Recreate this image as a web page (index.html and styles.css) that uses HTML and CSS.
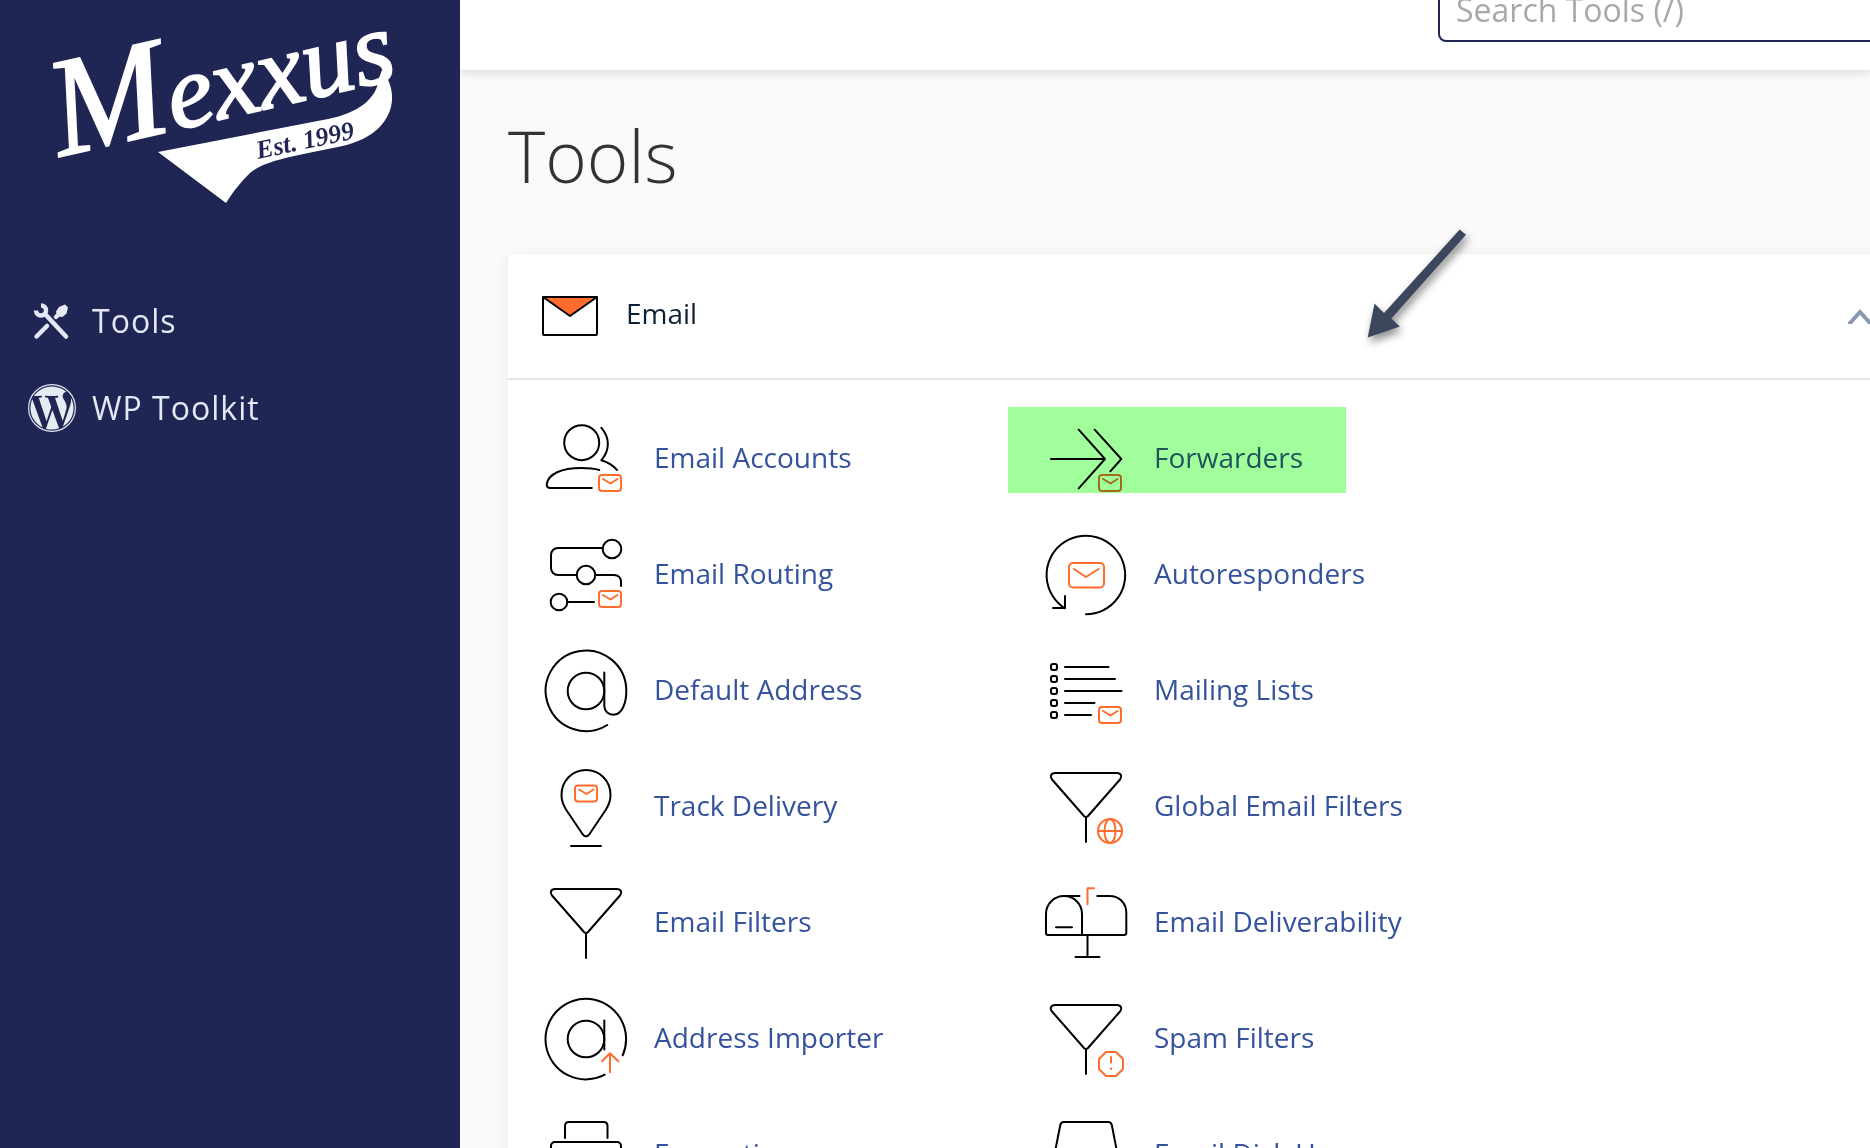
FILE: index.html
```html
<!DOCTYPE html>
<html lang="en">
<head>
    <meta charset="UTF-8">
    <meta name="viewport" content="width=device-width, initial-scale=1.0">
    <title>Tools</title>
    <link rel="stylesheet" href="styles.css">
</head>
<body>
    <!-- Shared icon parts -->
    <svg class="sprite" aria-hidden="true">
        <symbol id="mini-mail" viewBox="0 0 26 20">
            <rect x="1.5" y="1.5" width="22" height="16" rx="3"/>
            <path d="M5.5 5.5l7.500 4.500 7-4.500"/>
        </symbol>
        <symbol id="funnel" viewBox="0 0 96 96">
            <path d="M17 14h62c4 0 5.500 3.500 3 6.500L50 57c-1.200 1.200-2.800 1.200-4 0L14 20.500c-2.500-3-1-6.500 3-6.500zM48 58v25"/>
        </symbol>
    </svg>

    <div class="app">
        <!-- Sidebar -->
        <aside class="sidebar">
            <a href="#" class="logo" aria-label="Mexxus Est. 1999">
                <svg viewBox="50 10 350 200" width="350" height="200">
                    <path class="logo-fill" d="M158 152L328 119C358 113 377 99 379 78L382 70C393 84 395 101 388 115C380 132 362 142 338 147C300 155 262 160 248 175C238 185 231 195 226 203Z"/>
                    <g transform="rotate(-13 62 154)">
                        <text class="logo-name" x="60" y="156"><tspan class="logo-initial">M</tspan>exxus</text>
                    </g>
                    <text class="logo-est" x="258" y="159" transform="rotate(-12 258 159)">Est. 1999</text>
                </svg>
            </a>
            <nav class="menu">
                <a href="#" class="menu-item">
                    <svg viewBox="0 0 48 48" width="48" height="48">
                        <path class="tool-head" d="M8 13.500A5 5 0 1 0 13 8.500"/>
                        <path class="tool-line" d="M17 17l21 22.500M19 29L8.500 39.500M28 20l5-5"/>
                        <path class="tool-fill" d="M37 7.500l3 3-1.500 6-4 3.500-3.500-.5-2.500-2.500-.5-2.500L31 10z"/>
                    </svg>
                    <span>Tools</span>
                </a>
                <a href="#" class="menu-item">
                    <svg viewBox="0 0 24 24" width="48" height="48">
                        <circle class="wp-ring" cx="12" cy="12" r="11.700"/>
                        <path class="tool-fill" d="M21.469 6.825c.84 1.537 1.318 3.3 1.318 5.175 0 3.979-2.156 7.456-5.363 9.325l3.295-9.527c.615-1.54.82-2.771.82-3.864 0-.405-.026-.78-.07-1.11m-7.981.105c.647-.03 1.232-.105 1.232-.105.582-.075.514-.93-.067-.899 0 0-1.755.135-2.88.135-1.064 0-2.85-.15-2.85-.15-.585-.03-.661.855-.075.885 0 0 .54.061 1.125.09l1.68 4.605-2.37 7.08L5.354 6.9c.649-.03 1.234-.1 1.234-.1.585-.075.516-.93-.065-.896 0 0-1.746.138-2.874.138-.2 0-.438-.008-.69-.015C4.911 3.15 8.235 1.215 12 1.215c2.809 0 5.365 1.072 7.286 2.833-.046-.003-.091-.009-.141-.009-1.06 0-1.812.923-1.812 1.914 0 .89.513 1.643 1.06 2.531.411.72.89 1.643.89 2.977 0 .915-.354 1.994-.821 3.479l-1.075 3.585-3.9-11.61zM12 22.784c-1.059 0-2.081-.153-3.048-.437l3.237-9.406 3.315 9.087c.024.053.05.101.078.149-1.12.393-2.325.607-3.582.607M1.211 12c0-1.564.336-3.05.935-4.39L7.29 21.709C3.694 19.96 1.212 16.271 1.211 12"/>
                    </svg>
                    <span>WP Toolkit</span>
                </a>
            </nav>
        </aside>

        <div class="page">
            <!-- Search bar -->
            <header class="topbar">
                <input type="search" class="search" placeholder="Search Tools (/)" aria-label="Search Tools">
            </header>

            <main class="content">
                <h1>Tools</h1>

                <section class="card">
                    <div class="card-header">
                        <svg class="card-icon" viewBox="0 0 64 44" width="64" height="44">
                            <path class="flap" d="M5 3h54L32 22z"/>
                            <rect x="5" y="3" width="54" height="38" rx="1"/>
                        </svg>
                        <h2>Email</h2>
                        <button class="toggle" aria-label="Collapse Email">
                            <svg viewBox="0 0 24 16" width="24" height="16"><path d="M2 15L12 4l10 11"/></svg>
                        </button>
                    </div>

                    <div class="tools">
                        <a href="#" class="tool">
                            <svg class="icon" viewBox="0 0 96 96">
                                <circle cx="43.700" cy="31.700" r="17.500"/>
                                <path d="M63.300 16.700c8.500 10 9 22 0 32.600 6 1.700 11.500 5 15.700 9.700M61.300 59c-5-1.500-11-2-18-2-20 0-33 6-34.500 16-.3 2.700 1 4 3.500 4h41.500"/>
                                <use class="accent" href="#mini-mail" x="59.500" y="62.500" width="26" height="20"/>
                            </svg>
                            <span>Email Accounts</span>
                        </a>
                        <a href="#" class="tool highlighted">
                            <svg class="icon" viewBox="0 0 96 96">
                                <path d="M13 48h54M40.700 18.700L67 48 40.700 77.300M56.700 18.700L83.300 48l-11 12.300"/>
                                <use class="accent" href="#mini-mail" x="59.500" y="62.500" width="26" height="20"/>
                            </svg>
                            <span>Forwarders</span>
                        </a>
                        <a href="#" class="tool">
                            <svg class="icon" viewBox="0 0 96 96">
                                <circle cx="74" cy="22" r="9.300"/>
                                <circle cx="48" cy="48" r="9.300"/>
                                <circle cx="21" cy="75" r="8.300"/>
                                <path d="M64.500 21H20c-4 0-7 3-7 7v13c0 4 3 7 7 7h18.500M57.500 48H76c4.500 0 7 3 7 7v4M29.500 75H56"/>
                                <use class="accent" href="#mini-mail" x="59.500" y="62.500" width="26" height="20"/>
                            </svg>
                            <span>Email Routing</span>
                        </a>
                        <a href="#" class="tool">
                            <svg class="icon" viewBox="0 0 96 96">
                                <path d="M48 87.300A39.300 39.300 0 1 0 27 81.300M15 81h12V69"/>
                                <g class="accent">
                                    <rect x="31" y="36" width="35" height="24.500" rx="4"/>
                                    <path d="M36 42l12 8 12.500-8"/>
                                </g>
                            </svg>
                            <span>Autoresponders</span>
                        </a>
                        <a href="#" class="tool">
                            <svg class="icon" viewBox="0 0 96 96">
                                <circle cx="48" cy="48" r="18.300"/>
                                <path d="M66.300 29.500V63c0 5 4 8.700 9 8.700 9 0 13-12 13-23.700A40.300 40.300 0 1 0 69.300 82"/>
                            </svg>
                            <span>Default Address</span>
                        </a>
                        <a href="#" class="tool">
                            <svg class="icon" viewBox="0 0 96 96">
                                <rect x="13" y="21" width="6" height="6" rx="2"/>
                                <rect x="13" y="33" width="6" height="6" rx="2"/>
                                <rect x="13" y="45" width="6" height="6" rx="2"/>
                                <rect x="13" y="57" width="6" height="6" rx="2"/>
                                <rect x="13" y="69" width="6" height="6" rx="2"/>
                                <path d="M27 24h43.500M27 36h50M27 48h56.500M27 60h29.500M27 72h26"/>
                                <use class="accent" href="#mini-mail" x="59.500" y="62.500" width="26" height="20"/>
                            </svg>
                            <span>Mailing Lists</span>
                        </a>
                        <a href="#" class="tool">
                            <svg class="icon" viewBox="0 0 96 96">
                                <path d="M48 11c-14 0-24.500 11-24.500 25 0 6 2 10.500 4.500 14.500L44.500 75c1.800 3 5.200 3 7 0L68 50.500c2.500-4 4.500-8.500 4.500-14.500 0-14-10.500-25-24.500-25zM33 87h30"/>
                                <use class="accent" href="#mini-mail" x="35.500" y="25" width="26" height="20"/>
                            </svg>
                            <span>Track Delivery</span>
                        </a>
                        <a href="#" class="tool">
                            <svg class="icon" viewBox="0 0 96 96">
                                <use href="#funnel" width="96" height="96"/>
                                <g class="accent">
                                    <circle cx="72" cy="72" r="12"/>
                                    <ellipse cx="72" cy="72" rx="5.500" ry="12"/>
                                    <path d="M60 72h24"/>
                                </g>
                            </svg>
                            <span>Global Email Filters</span>
                        </a>
                        <a href="#" class="tool">
                            <svg class="icon" viewBox="0 0 96 96">
                                <use href="#funnel" width="96" height="96"/>
                            </svg>
                            <span>Email Filters</span>
                        </a>
                        <a href="#" class="tool">
                            <svg class="icon" viewBox="0 0 96 96">
                                <path d="M44 60V39c0-10-8-18-18-18S8 29 8 39v19c0 1.500.5 2 2 2h76c1.500 0 2.300-.5 2.300-2V38c0-10-7-17-17-17h-12M26 21h15.500M18 52.300h16M49.500 60v22M37.500 82h24"/>
                                <path class="accent" d="M49.500 29.300v-16h6.500"/>
                            </svg>
                            <span>Email Deliverability</span>
                        </a>
                        <a href="#" class="tool">
                            <svg class="icon" viewBox="0 0 96 96">
                                <circle cx="48" cy="48" r="18.300"/>
                                <path d="M66.300 29.500v29M84.700 64.300A40.300 40.300 0 1 0 66.700 83.700"/>
                                <path class="accent" d="M72 81.300V62.500M64 70.300l8-8 8.300 8"/>
                            </svg>
                            <span>Address Importer</span>
                        </a>
                        <a href="#" class="tool">
                            <svg class="icon" viewBox="0 0 96 96">
                                <use href="#funnel" width="96" height="96"/>
                                <path class="accent" d="M68 61h10l7 7v10l-7 7H68l-7-7V68zM73 66v5.500M73 77.500v.5"/>
                            </svg>
                            <span>Spam Filters</span>
                        </a>
                        <a href="#" class="tool">
                            <svg class="icon" viewBox="0 0 96 96">
                                <path d="M27 31V19c0-2.500 1.500-4 4-4h34.500c2.500 0 4 1.500 4 4v12"/>
                                <rect x="13" y="35" width="70" height="48" rx="4"/>
                            </svg>
                            <span>Encryption</span>
                        </a>
                        <a href="#" class="tool">
                            <svg class="icon" viewBox="0 0 96 96">
                                <path d="M14 60l8.300-42c.5-2 1.500-3 3.500-3h44.500c2 0 3 1 3.500 3L82 60v20H14z"/>
                            </svg>
                            <span>Email Disk Usage</span>
                        </a>
                    </div>
                </section>
            </main>

            <!-- Pointer to the Forwarders tool -->
            <svg class="pointer" viewBox="0 0 110 120" width="110" height="120" aria-hidden="true">
                <path d="M8.700 115.400L15.500 81.600 25 91 100.700 7.600l6.300 5.100L32.400 96.500l8.400 8.100z"/>
            </svg>
        </div>
    </div>
</body>
</html>
```

FILE: styles.css
```css
* {
    box-sizing: border-box;
}

body {
    font-family: "Open Sans", "Noto Sans", sans-serif;
    font-size: 28px;
    background-color: #fafafa;
    margin: 0;
}

a {
    text-decoration: none;
}

svg {
    display: block;
    flex-shrink: 0;
}

.sprite {
    display: none;
}

.app {
    display: flex;
    height: 100vh;
    overflow: hidden;
}

/* Sidebar */
.sidebar {
    width: 460px;
    flex-shrink: 0;
    background: #1f2653;
}

.logo {
    display: block;
    padding: 10px 50px 0;
}

.logo svg {
    overflow: visible;
}

.logo-fill {
    fill: #fff;
}

.logo-name {
    font-family: "Liberation Serif", serif;
    font-style: italic;
    font-size: 104px;
    fill: #fff;
    stroke: #fff;
    stroke-width: 2;
}

.logo-initial {
    font-size: 140px;
}

.logo-est {
    font-family: "Liberation Serif", serif;
    font-style: italic;
    font-weight: bold;
    font-size: 26px;
    fill: #1f2653;
}

.menu {
    margin-top: 67px;
}

.menu-item {
    display: flex;
    align-items: center;
    gap: 16px;
    padding: 20px 28px 19px;
    font-size: 32px;
    line-height: 48px;
    letter-spacing: 1px;
    color: #e4e7f6;
}

.tool-fill {
    fill: #e6eaf2;
}

.tool-line,
.tool-head {
    fill: none;
    stroke: #e4e7f6;
    stroke-width: 4.500;
    stroke-linecap: round;
}

.tool-head {
    stroke-linecap: butt;
}

.wp-ring {
    fill: none;
    stroke: #e4e7f6;
    stroke-width: .6;
}

/* Page */
.page {
    position: relative;
    flex: 1;
    min-width: 0;
    overflow: hidden;
}

.topbar {
    display: flex;
    align-items: flex-end;
    justify-content: flex-end;
    height: 70px;
    padding-bottom: 28px;
    background: #fff;
    box-shadow: 0 2px 10px rgba(0, 0, 0, 0.15);
}

.search {
    width: 440px;
    height: 64px;
    margin-right: -8px;
    padding: 0 16px 2px;
    border: 2px solid #1f2653;
    border-radius: 8px;
    background: #fff;
    font-family: inherit;
    font-size: 32px;
    flex-shrink: 0;
}

.search::placeholder {
    color: #a9a9a9;
}

.content {
    padding: 43px 0 0 48px;
}

h1 {
    margin: 0 0 55px;
    font-size: 71px;
    font-weight: 300;
    line-height: 86px;
    color: #333;
}

/* The card runs past the right edge of the window */
.card {
    margin-right: -30px;
    background: #fff;
    border-radius: 6px;
    box-shadow: 0 2px 16px rgba(0, 0, 0, 0.07);
}

.card-header {
    display: flex;
    align-items: center;
    gap: 24px;
    height: 126px;
    padding: 0 28px 0 30px;
    border-bottom: 2px solid #e3e5ea;
}

.card-icon {
    fill: none;
    stroke: #000;
    stroke-width: 2;
    stroke-linejoin: round;
}

.flap {
    fill: #ff6c2c;
}

h2 {
    flex: 1;
    margin: 0;
    font-size: 28px;
    font-weight: 400;
    line-height: 40px;
    padding-bottom: 6px;
    color: #0b2036;
}

.toggle {
    padding: 0;
    border: 0;
    background: none;
    cursor: pointer;
}

.toggle path {
    fill: none;
    stroke: #8d98b1;
    stroke-width: 4;
    stroke-linecap: round;
}

.tools {
    display: grid;
    grid-template-columns: repeat(auto-fill, 500px);
    max-width: 1200px;
    row-gap: 20px;
    padding: 31px 30px;
}

.tool {
    position: relative;
    display: flex;
    align-items: center;
    gap: 20px;
    color: #34539c;
}

.tool span {
    padding-bottom: 4px;
}

.icon {
    width: 96px;
    height: 96px;
    fill: none;
    stroke: #000;
    stroke-width: 2;
    stroke-linecap: round;
    stroke-linejoin: round;
}

.accent {
    stroke: #ff6c2c;
}

.highlighted::after {
    content: "";
    position: absolute;
    top: -4px;
    left: -30px;
    width: 338px;
    height: 86px;
    background: #a0ff9a;
    mix-blend-mode: multiply;
}

/* Arrow laid over the page */
.pointer {
    position: absolute;
    top: 222px;
    left: 899px;
    fill: #3b475c;
    overflow: visible;
    filter: drop-shadow(2px 5px 4px rgba(0, 0, 0, 0.45));
}
```
